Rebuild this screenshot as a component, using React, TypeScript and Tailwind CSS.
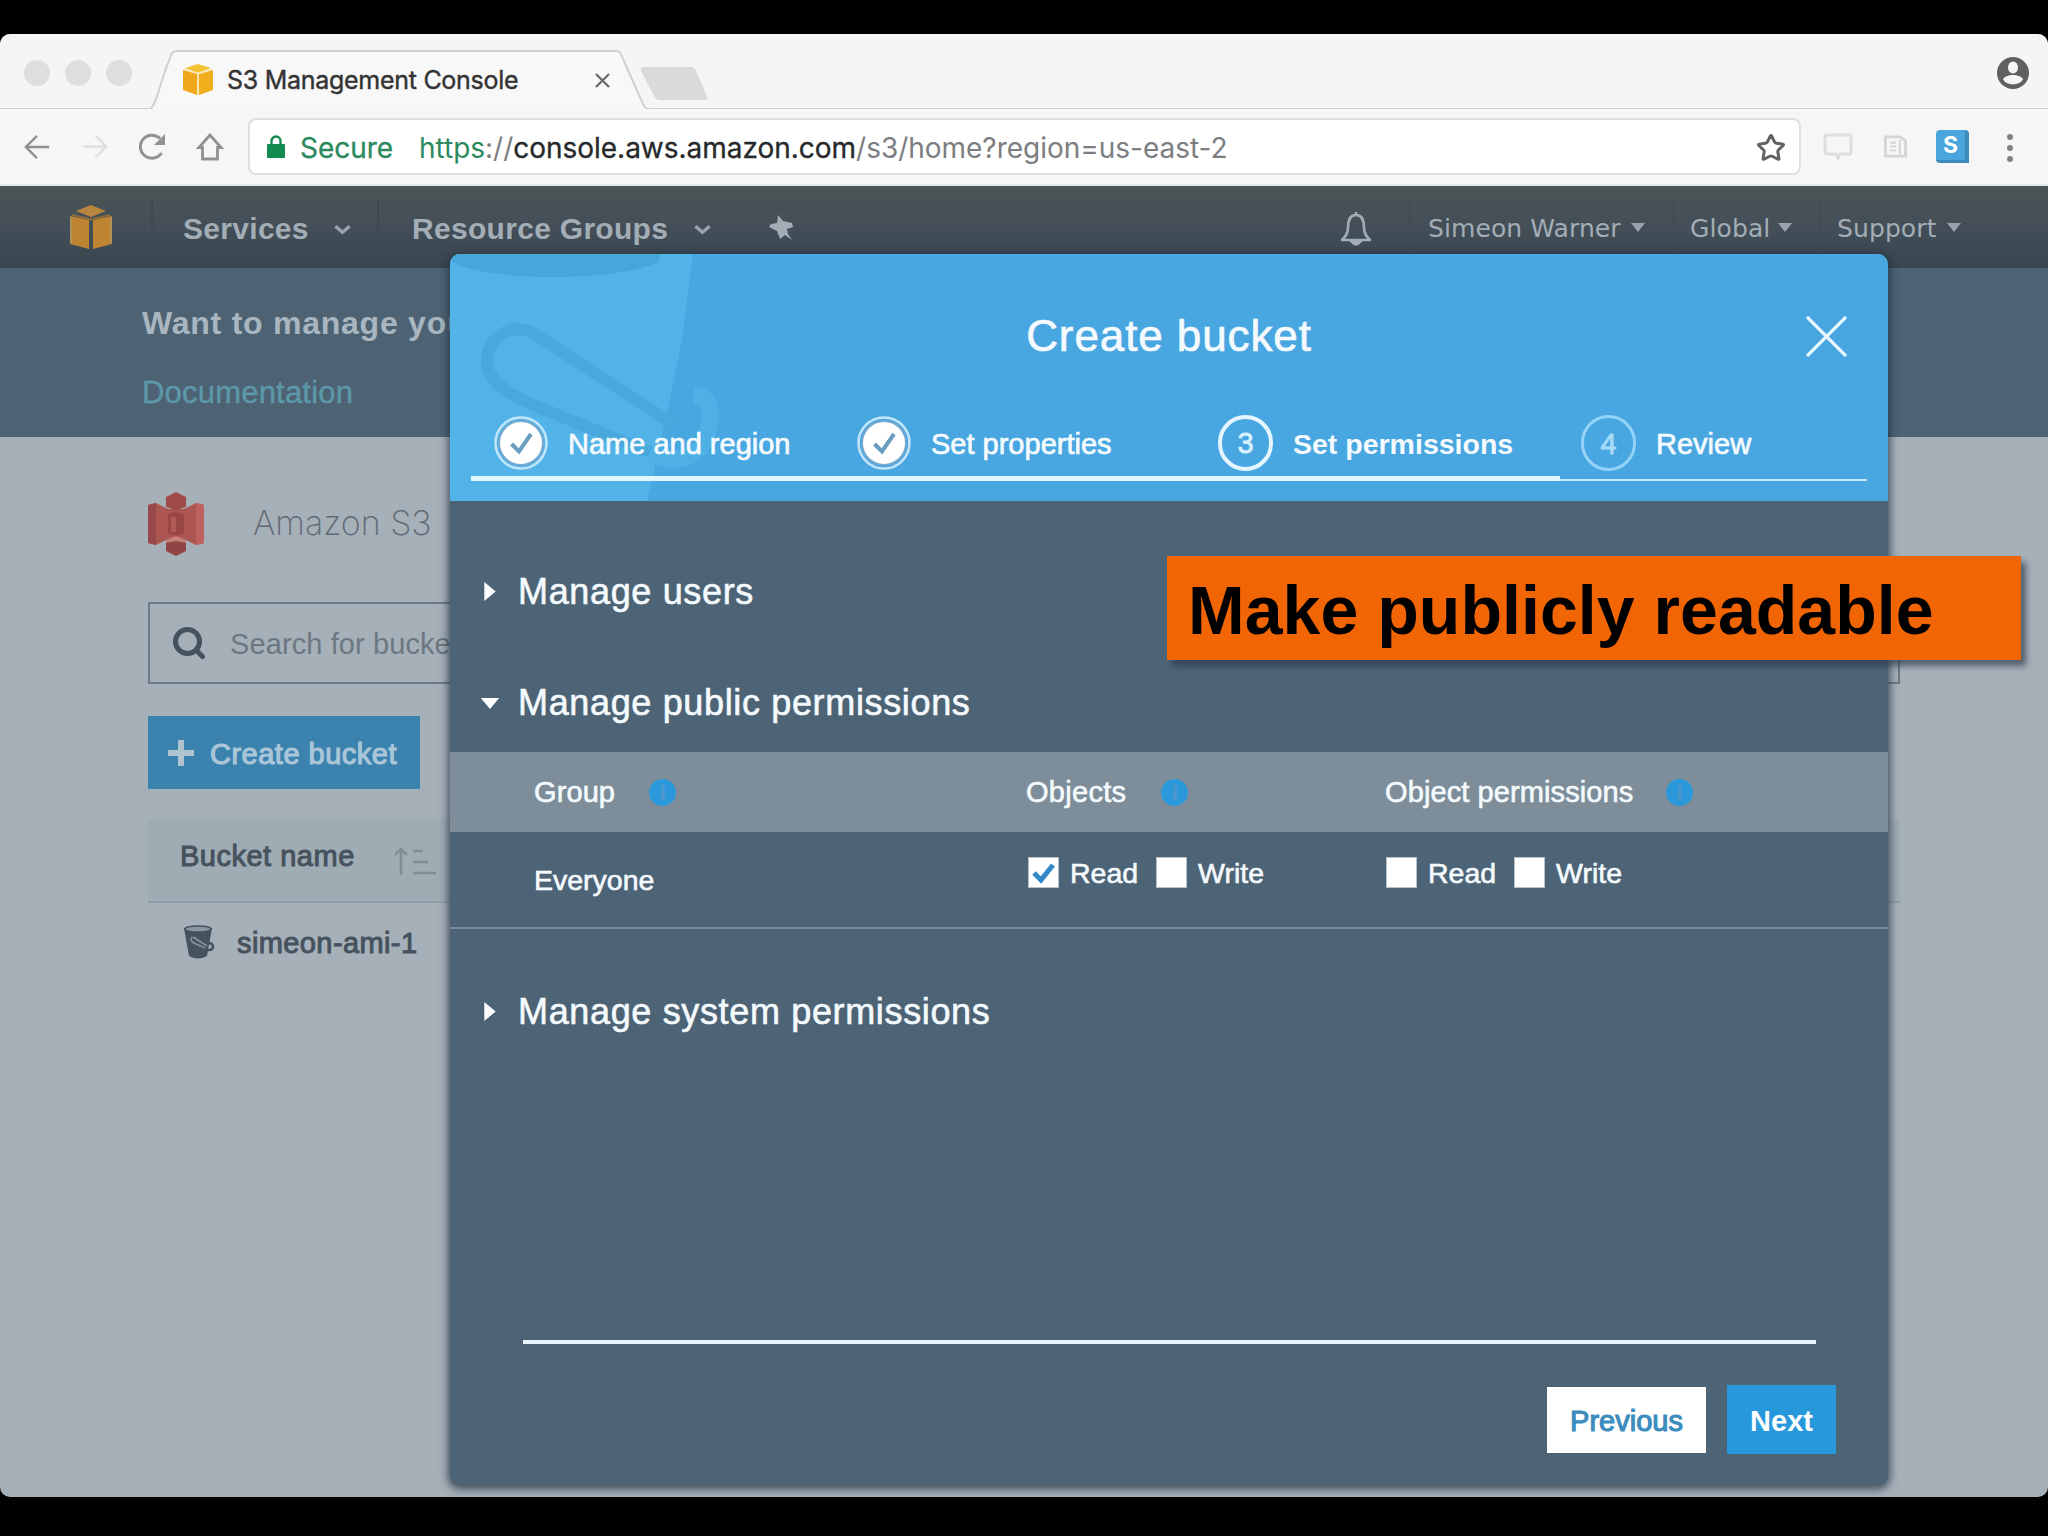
import React, { useState } from 'react';
import { Search, Star } from 'lucide-react';

const steps = [
  { id: 1, label: 'Name and region', state: 'done' },
  { id: 2, label: 'Set properties', state: 'done' },
  { id: 3, label: 'Set permissions', state: 'active' },
  { id: 4, label: 'Review', state: 'todo' },
];

function TabCube({ className }: { className: string }) {
  return (
    <svg viewBox="0 0 30 31" className={className}>
      <path d="M15 0 28 4 15 9 2 4Z" fill="#f2c233" />
      <path d="M0 6 14 10V31L0 26Z" fill="#eea81a" />
      <path d="M30 6 16 10V31L30 26Z" fill="#f0ad1c" />
      <path d="M1 5 15 9.500 29 5" fill="none" stroke="#fbe6ae" strokeWidth="1.500" />
      <path d="M15 9.500V31" fill="none" stroke="#fbe6ae" strokeWidth="2" />
    </svg>
  );
}

function NavCube({ className }: { className: string }) {
  return (
    <svg viewBox="0 0 42 44" className={className}>
      <path d="M21 0 36 6 21 12 6 6Z" fill="#b9863f" />
      <path d="M0 11 19 15V44L0 39Z" fill="#bf8431" />
      <path d="M42 11 23 15V44L42 39Z" fill="#bf8431" />
      <path d="M2 10 21 14.500 40 10" fill="none" stroke="#8d6d3c" strokeWidth="2" />
      <path d="M1 12v26M41 12v26" fill="none" stroke="#a99767" strokeWidth="1.500" />
    </svg>
  );
}

function Caret() {
  return (
    <svg viewBox="0 0 14 9" className="w-[14px] h-[9px] fill-[#98a3ac]">
      <path d="M0 0h14L7 9Z" />
    </svg>
  );
}

function Chevron() {
  return (
    <svg viewBox="0 0 18 10" className="w-[17px] h-[10px] mt-[5px]" fill="none" stroke="#98a3ac" strokeWidth="3.6">
      <path d="M1.5 1 9 7.5 16.5 1" />
    </svg>
  );
}

function BrowserChrome() {
  return (
    <div className="font-[Inter,sans-serif]">
      {/* Tab strip */}
      <div className="relative h-[75px] bg-[#f5f5f6] flex">
        <svg viewBox="0 0 2048 75" className="absolute inset-0 w-full h-full">
          <path d="M0 75H150C156 73 160 48 170 24 172 18 173 17 178 17H616C620 17 621 20 623 25L643 70C645 74 646 75 650 75H2048" fill="#f8f8f9" stroke="#cfd0d1" strokeWidth="2" />
          <path d="M642 33H690Q694 33 696 37L707 62Q708 66 704 66H660Q656 66 654 62L641 37Q640 33 644 33Z" fill="#dadadb" />
        </svg>
        <div className="relative flex items-center w-full pt-[3px]">
          <div className="flex gap-[15px] ml-6 w-[152px]">
            <span className="w-[26px] h-[26px] rounded-full bg-[#dedede]" />
            <span className="w-[26px] h-[26px] rounded-full bg-[#dedede]" />
            <span className="w-[26px] h-[26px] rounded-full bg-[#dedede]" />
          </div>
          <TabCube className="w-[30px] h-[31px] ml-[7px] mt-[13px]" />
          <span className="ml-[14px] mt-[16px] w-[368px] text-[25px] text-[#333] [-webkit-text-stroke:0.4px_#333] tracking-[-0.28px] whitespace-nowrap">S3 Management Console</span>
          <svg viewBox="0 0 16 16" className="w-[15px] h-[15px] mt-[15px]" fill="none" stroke="#6a6a6a" strokeWidth="2.4">
            <path d="M1 1l14 14M15 1 1 15" />
          </svg>
          <svg viewBox="0 0 32 32" className="w-[32px] h-[32px] ml-auto mr-[19px]">
            <circle cx="16" cy="16" r="16" fill="#606062" />
            <ellipse cx="16" cy="10.500" rx="5" ry="6" fill="#f5f5f6" />
            <path d="M6 22.500C8 16.500 24 16.500 26 22.500 22 29 10 29 6 22.500Z" fill="#f5f5f6" />
          </svg>
        </div>
      </div>
      {/* Toolbar */}
      <div className="h-[77px] bg-[#f6f6f7] border-b-2 border-[#e4e8ea] flex items-center">
        <svg viewBox="0 0 28 28" className="w-[26px] h-[26px] ml-[24px]" fill="none" stroke="#909193" strokeWidth="2.6">
          <path d="M27 14H3M14 2 2 14l12 12" />
        </svg>
        <svg viewBox="0 0 28 28" className="w-[25px] h-[25px] ml-[33px]" fill="none" stroke="#dedfe0" strokeWidth="2.6">
          <path d="M1 14h24M14 2l12 12-12 12" />
        </svg>
        <svg viewBox="0 0 28 28" className="w-[28px] h-[28px] ml-[30px]" fill="none" stroke="#909193" strokeWidth="3">
          <path d="M23.500 20A11.500 11.500 0 1 1 22 5.500" />
          <path d="M27 1v11H16Z" fill="#909193" stroke="none" />
        </svg>
        <svg viewBox="0 0 28 28" className="w-[28px] h-[28px] ml-[30px]" fill="none" stroke="#909193" strokeWidth="2.800">
          <path d="M14 2 3 14.500h3.500V26h15V14.500H25Z" />
        </svg>
        <div className="ml-[24px] w-[1553px] h-[57px] bg-white border-2 border-[#dedfe1] rounded-lg flex items-center text-[28px] tracking-[-0.02px] whitespace-nowrap">
          <svg viewBox="0 0 18 23" className="w-[18px] h-[23px] ml-[17px]">
            <path d="M4.500 11V6a4.500 4.500 0 0 1 9 0v5" fill="none" stroke="#128a50" strokeWidth="2.400" />
            <rect y="9" width="18" height="14" rx="1" fill="#128a50" />
          </svg>
          <span className="ml-[15px] pt-[3px] w-[119px] text-[#2a8a5e] [-webkit-text-stroke:0.3px]">Secure</span>
          <span className="pt-[3px] text-[#7c7e80]">
            <span className="text-[#2a8a5e]">https</span>://<span className="text-[#26282a] [-webkit-text-stroke:0.3px]">console.aws.amazon.com</span>/s3/home?region=us-east-2
          </span>
          <Star className="w-[30px] h-[30px] ml-auto mr-[13px] mt-[2px] text-[#606265]" strokeWidth={2.4} strokeLinejoin="miter" />
        </div>
        <svg viewBox="0 0 30 28" className="w-[30px] h-[28px] ml-[22px]" fill="none" stroke="#dcdddf" strokeWidth="3">
          <path d="M4 2h22q2 0 2 2v15q0 2-2 2H17l-2 4-2-4H4q-2 0-2-2V4q0-2 2-2Z" />
        </svg>
        <svg viewBox="0 0 26 24" className="w-[26px] h-[23px] ml-[29px]" fill="none" stroke="#d4d5d7" strokeWidth="3">
          <path d="M3 2h15l6 4v16H3Z" />
          <path d="M18 5v15M8 8h6M8 12h6M8 16h6" strokeWidth="2" />
        </svg>
        <span className="w-[33px] h-[33px] ml-[28px] bg-[#4aa5dc] border-b-[3px] border-r-[4px] border-[#3d8cbb] rounded-l-[4px] rounded-tr-[4px] flex items-center justify-center text-[23px] font-bold text-white">S</span>
        <div className="flex flex-col gap-[5px] ml-[38px] pt-[2px]">
          <span className="w-[6px] h-[6px] rounded-full bg-[#808184]" />
          <span className="w-[6px] h-[6px] rounded-full bg-[#808184]" />
          <span className="w-[6px] h-[6px] rounded-full bg-[#808184]" />
        </div>
      </div>
    </div>
  );
}

function ConsoleNav() {
  return (
    <div className="h-[82px] bg-linear-to-b from-[#4a5556] via-[#434e58] to-[#38464f] flex items-center text-[#a3adb5] whitespace-nowrap">
      <NavCube className="w-[42px] h-[44px] ml-[70px]" />
      <div className="ml-[39px] w-[226px] h-14 border-l-2 border-[#3e4952] flex items-center pl-[30px] text-[30px] font-bold tracking-[0.3px]">
        <span className="w-[151px] pt-[3px]">Services</span>
        <Chevron />
      </div>
      <div className="h-14 w-[391px] border-l-2 border-[#3e4952] flex items-center pl-[33px] text-[30px] font-bold tracking-[0.3px]">
        <span className="w-[282px] pt-[3px]">Resource Groups</span>
        <Chevron />
      </div>
      <svg viewBox="0 0 26 28" className="w-[26px] h-[28px] mt-[2px] fill-[#a3adb5]">
        <path d="M10 1 15 7 24 9 25 13 19 15 20 20 24 26 17 21 12 25 9 17 1 13 3 10 9 9Z" />
      </svg>
      <svg viewBox="0 0 32 34" className="w-[32px] h-[34px] ml-[546px] mt-[3px]" fill="none" stroke="#a3adb5" strokeWidth="2.600">
        <path d="M16 3C9 3 8 10 8 16 8 22 5 25 2 28H30C27 25 24 22 24 16 24 10 23 3 16 3Z" strokeLinejoin="round" />
        <path d="M16 0v3M12 30q4 5 8 0Z" fill="#a3adb5" />
      </svg>
      <div className="flex items-center font-['DejaVu_Sans',sans-serif] text-[25px] tracking-[0.1px] ml-[37px] h-14">
        <div className="h-full w-[264px] flex items-center pl-[18px] border-l border-[#3e4952]"><span className="w-[203px] pt-[3px]">Simeon Warner</span><Caret /></div>
        <div className="h-full w-[147px] flex items-center pl-[16px] border-l border-[#3e4952]"><span className="w-[88px] pt-[3px]">Global</span><Caret /></div>
        <div className="h-full flex items-center pl-[16px] border-l border-[#3e4952]"><span className="w-[110px] pt-[3px]">Support</span><Caret /></div>
      </div>
    </div>
  );
}

function BucketList() {
  return (
    <div className="pl-[148px] pr-[148px] text-[29px] text-[#46525e] whitespace-nowrap">
      <div className="pt-[55px] pb-[46px] flex items-center">
        <svg viewBox="0 0 56 64" className="w-[56px] h-[64px]">
          <path d="M0 13 8 11 20 17H36L48 11 56 13V51L48 53 36 47H20L8 53 0 51Z" fill="#ad5551" />
          <path d="M0 13 8 11V53L0 51Z" fill="#97494a" />
          <path d="M48 11 56 13V51L48 53Z" fill="#bd625d" />
          <path d="M18 5 28 0 38 5V15L28 18 18 15Z" fill="#a04b49" />
          <path d="M18 59 28 64 38 59V48L28 46 18 48Z" fill="#8f4543" />
          <path d="M18 48 28 44 38 48V51L28 49 18 51Z" fill="#c5807a" />
          <path d="M20 22 28 20 36 23V41L28 44 20 41Z" fill="#994744" />
          <path d="M23 25h5v15h-5Z" fill="#b25a56" />
        </svg>
        <span className="ml-[49px] font-[Inter,sans-serif] font-extralight text-[34px] leading-[40px] pb-[2px] text-[#5f6a74]">Amazon S3</span>
      </div>
      <div className="h-[82px] border-2 border-[#6d7984] flex items-center text-[#6c7781]">
        <Search className="w-[36px] h-[36px] ml-[21px] text-[#46525e]" strokeWidth={3.400} />
        <span className="ml-[23px] pt-[3px] tracking-[0.1px]">Search for buckets</span>
      </div>
      <div className="mt-8 w-[272px] h-[73px] bg-[#3b82ae] flex items-center text-[#aac6d8]">
        <svg viewBox="0 0 26 26" className="w-[26px] h-[26px] ml-5 fill-[#b0c4d0]"><path d="M10 0h6v10h10v6H16v10h-6V16H0v-6h10Z" /></svg>
        <span className="ml-[16px] pt-[5px] [-webkit-text-stroke:1.1px] tracking-[0.5px]">Create bucket</span>
      </div>
      <div className="mt-[30px] h-[84px] bg-[#a0acb3] border-b-2 border-[#929ea7] flex items-center pl-[32px] pb-[7px]">
        <span className="w-[215px] [-webkit-text-stroke:1px] tracking-[0.5px]">Bucket name</span>
        <svg viewBox="0 0 42 28" className="w-[42px] h-[28px] mt-2" fill="none" stroke="#818c95" strokeWidth="2.500">
          <path d="M6 28V3M0 8l6-6 6 6M18 4h10M18 15h15M18 26h23" />
        </svg>
      </div>
      <div className="h-[78px] flex items-center pl-[35px]">
        <svg viewBox="0 0 32 34" className="w-[32px] h-[34px]">
          <path d="M1 3h28l-5 28q-9 5-18 0Z" fill="#46525e" />
          <path d="M25 18q5 0 5 4-1 5-10 2" fill="none" stroke="#46525e" strokeWidth="2.500" />
          <ellipse cx="15" cy="4" rx="13" ry="3" fill="#8c98a2" stroke="#46525e" strokeWidth="1.500" />
          <path d="M9 12q-3 4 4 7l9 4M10 12l14 9" fill="none" stroke="#87939d" strokeWidth="1.600" />
        </svg>
        <span className="ml-[22px] pt-[3px] [-webkit-text-stroke:1px] tracking-[0.4px]">simeon-ami-1</span>
      </div>
    </div>
  );
}

function StepBadge({ id, state }: { id: number; state: string }) {
  if (state === 'done') {
    return (
      <svg viewBox="0 0 54 54" className="w-[54px] h-[54px]">
        <circle cx="27" cy="27" r="25.500" fill="none" stroke="#c4e6fb" strokeWidth="2.500" />
        <circle cx="27" cy="27" r="22" fill="#fff" stroke="#75a9cf" strokeWidth="2" />
        <path d="M17.500 28 25 35.500 37 18" fill="none" stroke="#6a9dc0" strokeWidth="4" />
      </svg>
    );
  }
  return (
    <span className={state === 'active'
      ? 'w-[55px] h-[56px] rounded-full border-4 border-[#e4f5ff] flex items-center justify-center text-[29px] text-[#d8f0ff] pt-[3px] [-webkit-text-stroke:0.8px]'
      : 'w-[55px] h-[56px] rounded-full border-[3px] border-[#94d3f8] flex items-center justify-center text-[29px] text-[#a8dbf8] pt-[3px] [-webkit-text-stroke:0.8px]'}>
      {id}
    </span>
  );
}

function InfoDot() {
  return (
    <span className="w-[27px] h-[27px] rounded-full bg-[#2b98dc] flex items-center justify-center font-['Liberation_Serif',serif] font-bold text-[22px] leading-none text-[#4d97cb]">i</span>
  );
}

function Check({ label, checked, onToggle }: { label: string; checked: boolean; onToggle: () => void }) {
  return (
    <button onClick={onToggle} className="w-[128px] flex items-center">
      <span className="w-[31px] h-[31px] bg-white border border-[#b9c2c8] flex items-center justify-center">
        {checked && (
          <svg viewBox="0 0 24 24" className="w-[24px] h-[24px]" fill="none" stroke="#3388c9" strokeWidth="5">
            <path d="M2 12 9 19 21 4" />
          </svg>
        )}
      </span>
      <span className="ml-[11px] pt-[2px]">{label}</span>
    </button>
  );
}

function Section({ title, open }: { title: string; open?: boolean }) {
  return (
    <div className="h-12 flex items-center text-[36px] tracking-[0.65px] [-webkit-text-stroke:0.6px]">
      <span className="w-[38px] ml-[30px] flex">
        {open ? (
          <svg viewBox="0 0 20 12" className="w-[20px] h-[11px] mt-[2px] fill-white"><path d="M0 0h20L10 12Z" /></svg>
        ) : (
          <svg viewBox="0 0 12 20" className="w-[12px] h-[19px] ml-[4px] fill-white"><path d="M0 0v20L12 10Z" /></svg>
        )}
      </span>
      <span className="pt-[2px]">{title}</span>
    </div>
  );
}

function CreateBucketDialog() {
  const [perms, setPerms] = useState({ objRead: true, objWrite: false, aclRead: false, aclWrite: false });
  const toggle = (key: keyof typeof perms) => setPerms({ ...perms, [key]: !perms[key] });

  return (
    <div className="absolute left-[450px] top-[220px] w-[1438px] h-[1231px] rounded-[10px] bg-[#4d6376] text-[#f4fafd] shadow-[0_2px_8px_2px_rgba(30,45,60,0.75)] flex flex-col whitespace-nowrap">
      <div className="relative h-[247px] shrink-0 bg-[#48a6e1] rounded-t-[10px] overflow-hidden">
        <svg viewBox="0 0 300 247" className="absolute left-0 top-0 w-[300px] h-[247px]">
          <path d="M0 0H243L232 86 217 160 197 247H0Z" fill="#51b3e7" />
          <path d="M2 0H209V8C165 28 40 28 2 8Z" fill="#47a7db" />
          <path d="M244 141C262 141 263 162 257 180 250 202 228 212 202 200" fill="none" stroke="#4fb0e6" strokeWidth="17" />
          <path d="M226 172 88 82C66 66 37 80 37 108 37 132 70 146 110 162L200 198" fill="none" stroke="#49a9dc" strokeWidth="12" />
        </svg>
        <div className="relative h-[160px] flex items-center justify-center pt-[3px]">
          <h2 className="text-[44px] tracking-[0.9px] [-webkit-text-stroke:0.7px]">Create bucket</h2>
          <svg viewBox="0 0 42 42" className="absolute right-[41px] top-[62px] w-[41px] h-[41px]" fill="none" stroke="#e9f8ff" strokeWidth="3.400">
            <path d="M1 1l40 40M41 1 1 41" />
          </svg>
        </div>
        <div className="relative pl-[21px] flex items-end">
          {steps.map((step) => (
            <div
              key={step.id}
              className={step.state === 'todo'
                ? 'w-[307px] h-[67px] flex items-center pl-[21px] pb-[7px] border-b-2 border-[#c8ecff]'
                : step.state === 'active'
                  ? 'w-[363px] h-[67px] flex items-center pl-[21px] pb-[5px] border-b-[5px] border-[#e0f7ff]'
                  : 'w-[363px] h-[67px] flex items-center pl-[23px] pb-[5px] border-b-[5px] border-[#e0f7ff]'}
            >
              <StepBadge id={step.id} state={step.state} />
              <span className={step.state === 'active' ? 'ml-[20px] text-[28.5px] font-bold pt-[4px]' : 'ml-[20px] text-[29px] pt-[4px] [-webkit-text-stroke:0.7px]'}>{step.label}</span>
            </div>
          ))}
        </div>
      </div>

      <div className="pt-[66px]"><Section title="Manage users" /></div>
      <div className="mt-[63px]"><Section title="Manage public permissions" open /></div>
      <div className="mt-[26px] h-[80px] bg-[#7d8e9a] flex items-center text-[29px] tracking-[0.1px] [-webkit-text-stroke:0.6px]">
        <div className="w-[576px] pl-[84px] flex items-center gap-[34px]"><span className="pt-[2px]">Group</span><InfoDot /></div>
        <div className="w-[359px] flex items-center gap-[35px]"><span className="pt-[2px] tracking-[0.3px]">Objects</span><InfoDot /></div>
        <div className="flex items-center gap-[33px]"><span className="pt-[2px]">Object permissions</span><InfoDot /></div>
      </div>
      <div className="h-[97px] border-b-2 border-[#7d8e9a] flex text-[28.5px] [-webkit-text-stroke:0.6px]">
        <div className="w-[578px] pl-[84px] pt-[27px]">Everyone</div>
        <div className="w-[358px] flex items-center pb-[14px]">
          <Check label="Read" checked={perms.objRead} onToggle={() => toggle('objRead')} />
          <Check label="Write" checked={perms.objWrite} onToggle={() => toggle('objWrite')} />
        </div>
        <div className="flex items-center pb-[14px]">
          <Check label="Read" checked={perms.aclRead} onToggle={() => toggle('aclRead')} />
          <Check label="Write" checked={perms.aclWrite} onToggle={() => toggle('aclWrite')} />
        </div>
      </div>
      <div className="mt-[58px]"><Section title="Manage system permissions" /></div>

      <div className="mt-auto mb-[31px] ml-[73px] mr-[52px]">
        <div className="h-[4px] mr-[20px] bg-[#e8f6fc]" />
        <div className="mt-[41px] flex justify-end items-center gap-[21px] text-[29px]">
          <button className="w-[159px] h-[66px] pt-[4px] bg-white text-[#3c8cbe] [-webkit-text-stroke:1.1px]">Previous</button>
          <button className="w-[109px] h-[69px] pt-[4px] bg-[#2798dc] text-white font-bold">Next</button>
        </div>
      </div>
    </div>
  );
}

export default function App() {
  return (
    <div className="w-[2048px] h-[1536px] bg-black pt-[34px] overflow-hidden font-['Liberation_Sans',Arial,sans-serif]">
      <div className="relative h-[1463px]">
        <div className="h-full rounded-[10px] overflow-hidden bg-[#a6b0b8]">
          <BrowserChrome />
          <ConsoleNav />
          <div className="h-[169px] bg-[#4d6374] pt-[37px] pl-[142px] whitespace-nowrap">
            <p className="text-[32px] leading-[36px] font-bold tracking-[0.75px] text-[#a9b6c0]">Want to manage your data</p>
            <p className="mt-[34px] text-[31px] leading-[36px] tracking-[0.2px] text-[#5c98a9] [-webkit-text-stroke:0.4px]">Documentation</p>
          </div>
          <BucketList />
        </div>
        <CreateBucketDialog />
        {/* Slide callout */}
        <div className="absolute left-[1167px] top-[522px] w-[854px] h-[104px] bg-[#f26505] shadow-[5px_6px_6px_rgba(40,55,70,0.65)] pl-[21px] pt-[3px] flex items-center text-[68px] tracking-[0.05px] font-bold text-black whitespace-nowrap">
          Make publicly readable
        </div>
      </div>
    </div>
  );
}
